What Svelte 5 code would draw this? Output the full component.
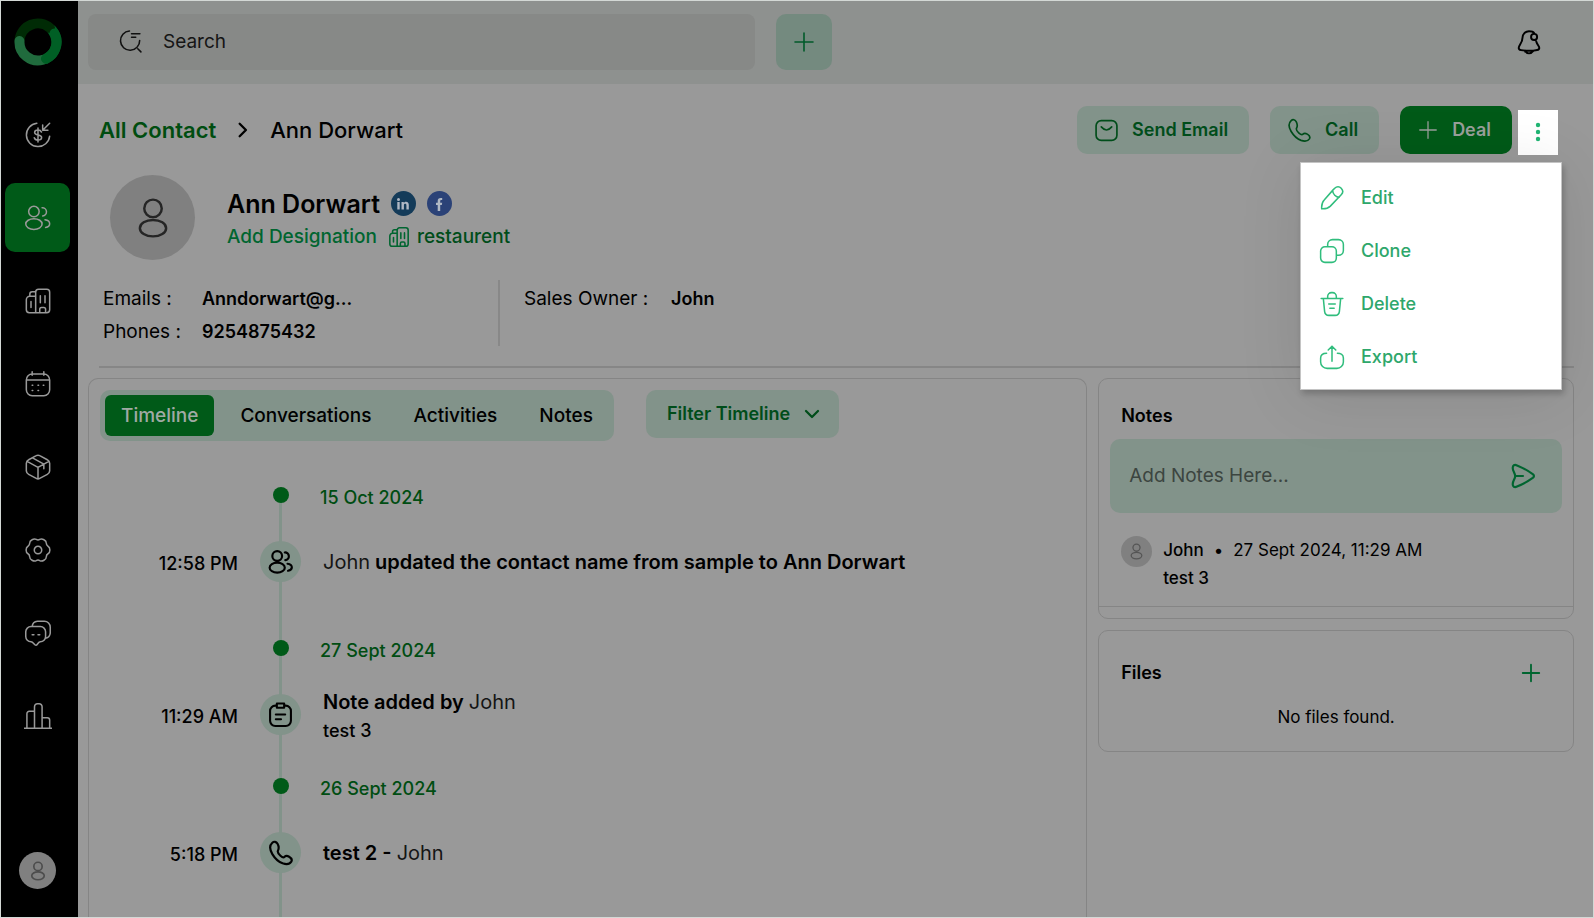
<script>
  const icons = {
    lead: 'M11 2a10 10 0 1 0 11 11M22 2l-6 6M16 3.5V8h4.5M15 9.5c-.5-1.2-1.6-1.7-3-1.7-1.7 0-2.9.8-2.9 2.1 0 3 6 1.3 6 4.2 0 1.4-1.3 2.2-3.1 2.2-1.6 0-2.8-.7-3.2-2M12 6v12',
    users: 'M13 6.5a4.5 4.5 0 1 1-9 0a4.5 4.5 0 1 1 9 0M15.5 17.2c0 2.6-3.1 4.6-7 4.6s-7-2-7-4.6s3.1-4.6 7-4.6s7 2 7 4.6M15.5 3.2a3.5 3.5 0 0 1 .5 7M18 13.6c2.5.4 4 1.8 4 3.3s-1.3 2.8-3.5 3.2',
    building: 'M10 22V4.5A2.5 2.5 0 0 1 12.5 2h7A2.5 2.5 0 0 1 22 4.5v15a2.5 2.5 0 0 1-2.5 2.5h-15A2.5 2.5 0 0 1 2 19.5V11a3 3 0 0 1 3-3h5M5 8V6a2 2 0 0 1 2-2h3M6 12.5v5M14 7.5v6M18 7.5v6M13.5 22v-3a1.5 1.5 0 0 1 1.5-1.5h2a1.5 1.5 0 0 1 1.5 1.5v3',
    calendar: 'M7 3.5h10a5 5 0 0 1 5 5V17a5 5 0 0 1-5 5H7a5 5 0 0 1-5-5V8.5a5 5 0 0 1 5-5M2 8.5h20M7 1.5v3M17 1.5v3M7 13h.5M12 13h.5M16.5 13h.5M7 17.5h.5M12 17.5h.5',
    box: 'M10.5 2.3a3 3 0 0 1 3 0l6.5 3.5a3.5 3.5 0 0 1 2 3v6.5a3.5 3.5 0 0 1-2 3l-6.5 3.5a3 3 0 0 1-3 0L4 18.3a3.5 3.5 0 0 1-2-3V8.8a3.5 3.5 0 0 1 2-3zM2.7 7.2L12 12.3l9.3-5.1M12 12.3v9.7M7.3 4.2l9.7 5.3v4',
    gear: 'M15.2 12a3.2 3.2 0 1 1-6.4 0a3.2 3.2 0 1 1 6.4 0M22.2 12Q22.2 14.4 20.6 15.2Q19.1 16.1 19.1 17.9Q19.2 19.7 17.1 20.8Q15.1 22 13.5 21.1Q12 20.2 10.5 21.1Q8.9 22 6.9 20.8Q4.8 19.7 4.9 17.9Q4.9 16.1 3.4 15.2Q1.8 14.4 1.8 12Q1.8 9.6 3.4 8.8Q4.9 7.9 4.9 6.1Q4.8 4.3 6.9 3.2Q8.9 2 10.5 2.9Q12 3.8 13.5 2.9Q15.1 2 17.1 3.2Q19.2 4.3 19.1 6.1Q19.1 7.9 20.6 8.8Q22.2 9.6 22.2 12z',
    chat: 'M6 6.5h8a4.5 4.5 0 0 1 4.5 4.5v4a4.5 4.5 0 0 1-4.5 4.5c-2 0-2.4 3-3.8 3S8 19.5 6 19.5A4.5 4.5 0 0 1 1.5 15v-4A4.5 4.5 0 0 1 6 6.5M7 6.5a5 5 0 0 1 4.500-4.500h6A5 5 0 0 1 22.5 7v5a5 5 0 0 1-4 4.5M7 13.5h1.5M12 13.5h1.5',
    chart: 'M0 22.5h24M2.5 22.5V10A2 2 0 0 1 4.5 8H9M9 22.5V4a2.5 2.5 0 0 1 2.5-2.5h1.5A2.5 2.5 0 0 1 15.5 4v18.5M15.5 13.5H20a2 2 0 0 1 2 2v7',
    search: 'M11 2a9.2 9.2 0 1 0 9.8 9M13 4.5h8M13 8h4M19 19l3 3',
    bell: 'M12 2a6 6 0 0 0-6 6c0 5-3.5 7-3.5 9.5C2.5 19.5 5 20 12 20s9.5-.5 9.5-2.5c0-1.8-2-3-2.8-6M8 20.2c1 1.4 2.5 2.3 4 2.3s3-1 4-2.3M12 2c2 0 4 .5 4.7 1.7M19.5 7.3a2.8 2.8 0 1 1-5.6 0a2.8 2.8 0 1 1 5.6 0',
    person: 'M17 6.5a5 5 0 1 1-10 0a5 5 0 1 1 10 0M19.5 17.8c0 2.6-3.3 4.7-7.5 4.7s-7.5-2.1-7.5-4.7s3.3-4.7 7.5-4.7s7.5 2.1 7.5 4.7',
    mail: 'M7 2.5h10a5 5 0 0 1 5 5v9a5 5 0 0 1-5 5H7a5 5 0 0 1-5-5v-9a5 5 0 0 1 5-5M7 8.5c3.5 4 6.5 4 10 0',
    phone: 'M8.8 3.5C7.6 1.5 5.6 1 4 2.5 1.5 4.8 1.3 8.5 4 13s6 7.2 9.5 8.5c3.5 1.2 6.5.8 8-1.5 1-1.7 0-3.3-2-4.5-1.7-1-3-1.2-4.2 0s-2 .6-3.8-1S8.6 11 9.2 9.8 10.5 6.5 8.8 3.5z',
    plus: 'M12 3v18M3 12h18',
    right: 'M8 4.5l7.5 7.5L8 19.5',
    down: 'M4 8l8 8 8-8',
    note: 'M8.5 3.5H7a5 5 0 0 0-5 5V18a5 5 0 0 0 5 5h10a5 5 0 0 0 5-5V8.5a5 5 0 0 0-5-5h-1.5M8.5 1.5h7v4h-7zM7.5 12h9M7.5 16.5h5',
    send: 'M2.5 4.5c0-2.3 1.5-3.3 4-2.3 5.5 2.2 10 4.8 14.5 8 1.5 1.2 1.5 2.4 0 3.6-4.5 3.2-9 5.8-14.5 8-2.5 1-4 0-4-2.3 0-3 2.3-4.8 2.3-7.5S2.5 7.5 2.5 4.5zM5 12h7',
    edit: 'M13 4.5l1.5-1.5c2-2 4.3-1.8 6 0s2 4 0 6L10.5 19.5c-1.8 1.8-4.5 2.7-8 2.5-.3-3.5.5-6.3 2.3-8.2zM12.5 5c.3 3.5 3 6.2 6.2 6.3',
    clone: 'M5.5 8H12a4 4 0 0 1 4 4v6.5a4 4 0 0 1-4 4H5.5a4 4 0 0 1-4-4V12a4 4 0 0 1 4-4M8 8V6a4.5 4.5 0 0 1 4.5-4.5H18A4.5 4.5 0 0 1 22.5 6v5.5A4.5 4.5 0 0 1 18 16h-2',
    trash: 'M2 7h20M4 7l1.2 12a4 4 0 0 0 4 3.5h5.6a4 4 0 0 0 4-3.5L20 7M8 7V5a3.5 3.5 0 0 1 3.5-3.5h1A3.5 3.5 0 0 1 16 5v2M9 12h6M10 16h4',
    share: 'M12 16V2M8.5 5.5L12 2l3.5 3.5M7 8.5c-3 0-5.5 1.5-5.5 4.5v3.5a6 6 0 0 0 6 6h9a6 6 0 0 0 6-6V13c0-3-2.5-4.5-5.5-4.5'
  };

  const nav = [
    { icon: 'lead', label: 'Leads' },
    { icon: 'users', label: 'Contacts' },
    { icon: 'building', label: 'Companies' },
    { icon: 'calendar', label: 'Calendar' },
    { icon: 'box', label: 'Products' },
    { icon: 'gear', label: 'Settings' },
    { icon: 'chat', label: 'Messages' },
    { icon: 'chart', label: 'Reports' }
  ];
  const tabs = ['Timeline', 'Conversations', 'Activities', 'Notes'];
  const menu = [
    { icon: 'edit', label: 'Edit' },
    { icon: 'clone', label: 'Clone' },
    { icon: 'trash', label: 'Delete' },
    { icon: 'share', label: 'Export' }
  ];

  let activeNav = $state('Contacts');
  let activeTab = $state('Timeline');
  let menuOpen = $state(true);
</script>

{#snippet icon(name, size = 24, stroke = 1.5)}
  <svg width={size} height={size} viewBox="0 0 24 24" fill="none" stroke="currentColor" stroke-width={stroke} stroke-linecap="round" stroke-linejoin="round" aria-hidden="true">
    <path d={icons[name]} />
  </svg>
{/snippet}

<div class="app">
  <aside class="sidebar">
    <a class="logo" href="#home" aria-label="Home">
      <svg width="48" height="48" viewBox="0 0 48 48" fill="none" stroke-width="10" stroke-linecap="round">
        <path d="M38 12A18.5 18.5 0 0 1 32 40.7" stroke="#005f25" />
        <path d="M5.500 22A18.500 18.500 0 0 1 36 10" stroke="#002b05" />
        <path d="M29 41.800A18.500 18.500 0 0 1 5.500 23" stroke="#206b3d" />
        <path d="M40.500 15.500A18.500 18.500 0 0 1 32 40.700" stroke="#005f25" />
      </svg>
    </a>
    <nav>
      {#each nav as item}
        <a href="#{item.label.toLowerCase()}" class="nav-item" class:active={item.label === activeNav} aria-label={item.label} onclick={() => (activeNav = item.label)}>
          {@render icon(item.icon, 28, 1.3)}
        </a>
      {/each}
    </nav>
    <button class="avatar user" aria-label="Account">{@render icon('person', 20, 2)}</button>
  </aside>

  <div class="page">
    <header class="topbar">
      <label class="search">
        {@render icon('search', 25, 1.5)}
        <input type="text" placeholder="Search" aria-label="Search" />
      </label>
      <button class="add" aria-label="Add">{@render icon('plus', 24, 1.6)}</button>
      <button class="bell" aria-label="Notifications">{@render icon('bell', 26, 1.8)}</button>
    </header>

    <main>
      <section class="contact">
        <div class="title-row">
          <div class="breadcrumb">
            <a href="#contacts">All Contact</a>
            {@render icon('right', 20, 2.8)}
            <span>Ann Dorwart</span>
          </div>
          <div class="actions">
            <button class="btn">{@render icon('mail', 25, 1.6)}Send Email</button>
            <button class="btn">{@render icon('phone', 25, 1.6)}Call</button>
            <button class="btn primary">{@render icon('plus', 22, 1.4)}Deal</button>
            <div class="more-wrap">
              <button class="more" aria-label="More actions" aria-expanded={menuOpen} onclick={() => (menuOpen = !menuOpen)}>
                <svg width="6" height="20" viewBox="0 0 6 20" fill="currentColor">
                  <circle cx="3" cy="3" r="2.2" /><circle cx="3" cy="10" r="2.2" /><circle cx="3" cy="17" r="2.2" />
                </svg>
              </button>
              {#if menuOpen}
                <div class="menu">
                  {#each menu as item}
                    <button>{@render icon(item.icon, 26, 1.4)}{item.label}</button>
                  {/each}
                </div>
              {/if}
            </div>
          </div>
        </div>

        <div class="profile">
          <div class="avatar large">{@render icon('person', 42, 1.4)}</div>
          <div class="identity">
            <div class="name">
              <h1>Ann Dorwart</h1>
              <a class="social linkedin" href="#linkedin" aria-label="LinkedIn">
                <svg width="14" height="14" viewBox="0 0 14 14" fill="currentColor"><circle cx="2.5" cy="2.5" r="1.5" /><path d="M1.3 5h2.4v7.5H1.3zM5.5 5h2.3v1c1.3-2 5-1.6 5 1.7v4.8h-2.4V8.3c0-2-2.5-1.9-2.5 0v4.2H5.5z" /></svg>
              </a>
              <a class="social facebook" href="#facebook" aria-label="Facebook">
                <svg width="14" height="14" viewBox="0 0 14 14" fill="currentColor"><path d="M5.7 14V8H4V5.7h1.7V4c0-2.3 1.3-3.5 4.5-3v2c-1.7-.1-2 .2-2 1.2v1.5h2L9.8 8H8.2v6z" /></svg>
              </a>
            </div>
            <div class="designation">
              <a href="#designation">Add Designation</a>
              {@render icon('building', 22, 1.7)}
              <a class="company" href="#company">restaurent</a>
            </div>
          </div>
        </div>

        <div class="details">
          <dl class="reach">
            <dt>Emails :</dt><dd>Anndorwart@g...</dd>
            <dt>Phones :</dt><dd>9254875432</dd>
          </dl>
          <dl class="owner">
            <dt>Sales Owner :</dt><dd>John</dd>
          </dl>
        </div>
      </section>

      <div class="columns">
        <section class="panel activity">
          <div class="toolbar">
            <div class="tabs" role="tablist">
              {#each tabs as tab}
                <button role="tab" aria-selected={tab === activeTab} class:active={tab === activeTab} onclick={() => (activeTab = tab)}>{tab}</button>
              {/each}
            </div>
            <label class="filter">
              <select aria-label="Filter Timeline">
                <option>Filter Timeline</option>
              </select>
              {@render icon('down', 18, 3)}
            </label>
          </div>

          <div class="timeline">
            <div class="day">
              <span class="rail"><i class="dot"></i></span>
              <h3>15 Oct 2024</h3>
            </div>
            <div class="event tall">
              <time>12:58 PM</time>
              <span class="rail"><span class="badge">{@render icon('users', 26, 2)}</span></span>
              <p><span class="by">John</span> updated the contact name from sample to Ann Dorwart</p>
            </div>
            <div class="day">
              <span class="rail"><i class="dot"></i></span>
              <h3>27 Sept 2024</h3>
            </div>
            <div class="event">
              <time>11:29 AM</time>
              <span class="rail"><span class="badge">{@render icon('note', 25, 2)}</span></span>
              <div class="text">
                <p>Note added by <span class="by">John</span></p>
                <p class="sub">test 3</p>
              </div>
            </div>
            <div class="day">
              <span class="rail"><i class="dot"></i></span>
              <h3>26 Sept 2024</h3>
            </div>
            <div class="event last">
              <time>5:18 PM</time>
              <span class="rail"><span class="badge">{@render icon('phone', 26, 2)}</span></span>
              <p>test 2 - <span class="by">John</span></p>
            </div>
          </div>
        </section>

        <div class="side">
          <section class="panel notes">
            <h2>Notes</h2>
            <div class="note-box">
              <input type="text" placeholder="Add Notes Here..." aria-label="Add a note" />
              <button aria-label="Send note">{@render icon('send', 26, 2)}</button>
            </div>
            <article class="note">
              <div class="avatar small">{@render icon('person', 17, 1.8)}</div>
              <div>
                <p><b>John</b><span>•</span><time>27 Sept 2024, 11:29 AM</time></p>
                <p><b>test 3</b></p>
              </div>
            </article>
          </section>

          <section class="panel files">
            <div class="files-head">
              <h2>Files</h2>
              <button aria-label="Add file">{@render icon('plus', 22, 2)}</button>
            </div>
            <p>No files found.</p>
          </section>
        </div>
      </div>
    </main>
  </div>
</div>

<style>
  :global(body) {
    margin: 0;
    background: #999999;
  }

  .app {
    display: flex;
    box-sizing: border-box;
    min-height: 100vh;
    border: 1px solid #d3d8d5;
    background: #999999;
    color: #000000;
    font-family: Inter, "Open Sans", sans-serif;
    font-size: 18px;
    line-height: 28px;
  }

  .app :global(*) {
    box-sizing: border-box;
  }

  svg {
    display: block;
    flex: none;
  }

  h1, h2, h3, p, dl, dd {
    margin: 0;
  }

  a {
    color: inherit;
    text-decoration: none;
  }

  button, input, select {
    border: 0;
    padding: 0;
    background: none;
    color: inherit;
    font: inherit;
  }

  button {
    cursor: pointer;
  }

  .avatar {
    display: flex;
    flex: none;
    align-items: center;
    justify-content: center;
    border-radius: 50%;
    background: #808080;
    color: #252525;
  }

  /* sidebar */
  .sidebar {
    display: flex;
    flex: none;
    flex-direction: column;
    align-items: center;
    width: 77px;
    padding: 17px 8px 28px 4px;
    background: #000000;
  }

  nav {
    display: flex;
    flex-direction: column;
    gap: 14px;
    width: 100%;
    margin-top: 34px;
  }

  .nav-item {
    display: flex;
    align-items: center;
    justify-content: center;
    height: 69px;
    border-radius: 10px;
    color: #999999;
  }

  .nav-item.active {
    background: #005a18;
  }

  .user {
    width: 37px;
    height: 37px;
    margin-top: auto;
    color: #4c4c4c;
  }

  /* top bar */
  .page {
    display: flex;
    flex: 1;
    flex-direction: column;
    min-width: 0;
  }

  .topbar {
    display: flex;
    align-items: center;
    height: 83px;
    padding-bottom: 2px;
    background: #8e918f;
  }

  .search {
    display: flex;
    align-items: center;
    gap: 20px;
    width: 44%;
    height: 56px;
    margin-left: 10px;
    padding-left: 30px;
    border-radius: 8px;
    background: #878987;
    color: #111111;
  }

  input {
    flex: 1;
    min-width: 0;
    outline: none;
    font-size: 19px;
  }

  .search input::placeholder {
    color: #151515;
    opacity: 1;
  }

  .add {
    display: flex;
    align-items: center;
    justify-content: center;
    width: 56px;
    height: 56px;
    margin-left: 21px;
    border-radius: 10px;
    background: #748a7f;
    color: #005a2a;
  }

  .bell {
    margin: 0 51px 0 auto;
  }

  /* contact header */
  main {
    display: flex;
    flex: 1;
    flex-direction: column;
    padding: 22px 19px 0 10px;
  }

  .contact {
    margin-left: 11px;
    border-bottom: 2px solid #868686;
  }

  .title-row, .breadcrumb, .actions {
    display: flex;
    align-items: center;
  }

  .title-row {
    justify-content: space-between;
    height: 48px;
  }

  .breadcrumb {
    gap: 17px;
    font-size: 22px;
    font-weight: 500;
  }

  .breadcrumb a {
    color: #004d10;
    font-weight: 600;
  }

  .actions {
    gap: 21px;
    padding-right: 16px;
  }

  .btn {
    display: flex;
    align-items: center;
    gap: 13px;
    height: 48px;
    padding: 0 21px 0 17px;
    border-radius: 10px;
    background: #82938a;
    color: #004d1a;
    font-weight: 600;
  }

  .btn.primary {
    background: #005a18;
    color: #999f9a;
  }

  .more-wrap {
    position: relative;
    margin-left: -15px;
    padding-top: 4px;
  }

  .more {
    display: flex;
    align-items: center;
    justify-content: center;
    width: 40px;
    height: 45px;
    background: #ffffff;
    color: #20b573;
  }

  .menu {
    position: absolute;
    z-index: 2;
    top: 56px;
    right: -4px;
    width: 262px;
    padding: 9px 0 5px;
    border: 1px solid #c4c4c4;
    background: #ffffff;
    box-shadow: 2px 4px 6px rgb(0 0 0 / 0.2), 0 6px 60px rgb(0 0 0 / 0.1);
  }

  .menu button {
    display: flex;
    align-items: center;
    gap: 16px;
    width: 100%;
    height: 53px;
    padding: 0 18px;
    color: #2ea76b;
    font-weight: 500;
  }

  .menu svg {
    color: #30bd7d;
  }

  .profile {
    display: flex;
    align-items: center;
    gap: 32px;
    margin: 21px 0 0 11px;
  }

  .avatar.large {
    width: 85px;
    height: 85px;
  }

  .identity {
    padding-top: 5px;
  }

  .name, .designation {
    display: flex;
    align-items: center;
    height: 33px;
  }

  .name {
    gap: 11px;
  }

  h1 {
    font-size: 25px;
    font-weight: 600;
  }

  .social {
    display: flex;
    align-items: center;
    justify-content: center;
    width: 25px;
    height: 25px;
    border-radius: 50%;
    color: #b0b8c4;
  }

  .linkedin {
    background: #143b59;
  }

  .facebook {
    background: #2b4277;
  }

  .designation {
    gap: 11px;
    color: #006530;
    font-size: 19px;
    font-weight: 500;
  }

  .designation .company {
    margin-left: -4px;
    color: #004d1a;
  }

  .details {
    display: flex;
    align-items: flex-start;
    padding: 20px 0;
  }

  dl {
    display: grid;
    row-gap: 5px;
    padding-top: 5px;
  }

  .reach {
    grid-template-columns: 99px auto;
    width: 401px;
    padding-left: 4px;
    border-right: 2px solid #888888;
  }

  .owner {
    grid-template-columns: 147px auto;
    padding-left: 24px;
  }

  dt {
    font-size: 19px;
  }

  dd {
    font-weight: 600;
  }

  /* panels */
  .columns {
    display: grid;
    flex: 1;
    grid-template-columns: minmax(0, 21fr) minmax(0, 10fr);
    gap: 11px;
    margin-top: 10px;
  }

  .panel {
    border: 1px solid #858585;
    border-radius: 10px;
  }

  .activity {
    display: flex;
    flex-direction: column;
    padding: 11px 10px 0 11px;
    border-bottom: 0;
    border-radius: 10px 10px 0 0;
  }

  .toolbar {
    display: flex;
    align-items: flex-start;
    gap: 32px;
  }

  .tabs {
    display: flex;
    padding: 5px;
    border-radius: 10px;
    background: #82938a;
  }

  .tabs button {
    height: 41px;
    padding: 0 16px;
    border-radius: 6px;
    font-size: 19px;
    font-weight: 500;
  }

  .tabs button + button {
    margin-left: 10px;
  }

  .tabs .active {
    background: #005a18;
    color: #a0aaa4;
  }

  .filter {
    display: flex;
    align-items: center;
    height: 48px;
    padding: 0 18px 0 21px;
    border-radius: 10px;
    background: #82938a;
    color: #004d1a;
  }

  .filter select {
    padding-right: 12px;
    appearance: none;
    outline: none;
    font-weight: 600;
  }

  .timeline {
    display: flex;
    flex: 1;
    flex-direction: column;
    padding-top: 39px;
  }

  .day, .event {
    display: grid;
    grid-template-columns: 138px 41px 1fr;
    column-gap: 22px;
  }

  .rail {
    display: flex;
    grid-column: 2;
    justify-content: center;
    background: linear-gradient(#82938a, #82938a) center / 3px 100% no-repeat;
  }

  .day {
    height: 61px;
  }

  .day:first-child .rail {
    background-position: center 10px;
  }

  .dot {
    width: 16px;
    height: 16px;
    margin-top: 7px;
    border-radius: 50%;
    background: #005a18;
  }

  h3 {
    padding-top: 4px;
    margin-left: -3px;
    color: #004d12;
    font-size: 18px;
    font-weight: 500;
  }

  .event {
    height: 77px;
  }

  .event.tall {
    height: 92px;
  }

  .event.last {
    flex: 1;
  }

  .event time {
    padding-top: 9px;
    font-weight: 500;
    text-align: right;
  }

  .event p {
    padding-top: 7px;
    font-size: 20px;
    font-weight: 600;
  }

  .event .by {
    color: #151515;
    font-weight: 400;
  }

  .event .text {
    margin-top: -13px;
  }

  .event .sub {
    padding-top: 1px;
    font-size: 18px;
    font-weight: 500;
  }

  .badge {
    display: flex;
    align-items: center;
    justify-content: center;
    width: 41px;
    height: 41px;
    border-radius: 50%;
    background: #82938a;
  }

  .side {
    display: flex;
    flex-direction: column;
    gap: 11px;
  }

  h2 {
    font-size: 18px;
    font-weight: 600;
  }

  .notes {
    padding: 23px 0 11px;
  }

  .notes h2 {
    padding-left: 22px;
  }

  .note-box {
    display: flex;
    height: 74px;
    margin: 9px 11px 0;
    padding: 0 26px 0 19px;
    border-radius: 10px;
    background: #82938a;
  }

  .note-box input::placeholder {
    color: #3c4540;
    opacity: 1;
  }

  .note-box button {
    color: #006530;
  }

  .note {
    display: flex;
    gap: 11px;
    padding: 23px 22px 14px;
    border-bottom: 1px solid #858585;
    font-size: 17px;
  }

  .avatar.small {
    width: 31px;
    height: 31px;
    color: #555555;
  }

  .note b {
    font-weight: 500;
  }

  .note span {
    margin: 0 10px;
  }

  .files {
    padding: 28px 22px 20px;
  }

  .files-head {
    display: flex;
    align-items: center;
    justify-content: space-between;
    padding-right: 9px;
  }

  .files-head button {
    color: #006530;
  }

  .files p {
    margin-top: 16px;
    font-size: 17px;
    text-align: center;
  }
</style>
